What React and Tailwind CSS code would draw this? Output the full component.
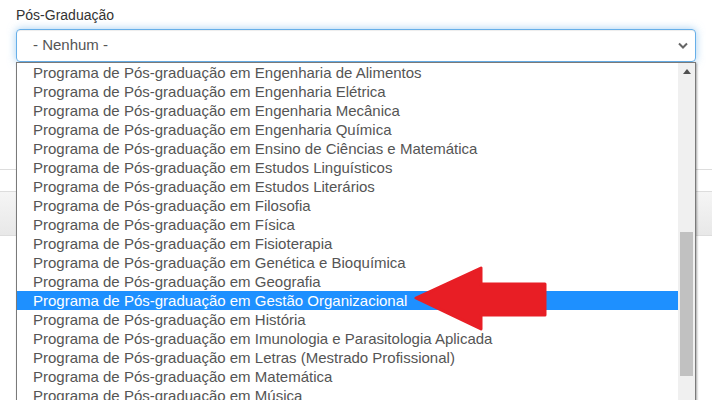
import React from "react";

const items = [
  "Engenharia de Alimentos",
  "Engenharia Elétrica",
  "Engenharia Mecânica",
  "Engenharia Química",
  "Ensino de Ciências e Matemática",
  "Estudos Linguísticos",
  "Estudos Literários",
  "Filosofia",
  "Física",
  "Fisioterapia",
  "Genética e Bioquímica",
  "Geografia",
  "Gestão Organizacional",
  "História",
  "Imunologia e Parasitologia Aplicada",
  "Letras (Mestrado Profissional)",
  "Matemática",
  "Música",
];

export default function App() {
  return (
    <div
      className="relative w-[712px] h-[400px] overflow-hidden bg-white"
      style={{ fontFamily: '"Liberation Sans", Arial, sans-serif' }}
    >
      {/* background panels */}
      <div className="h-[170px] border-b border-[#dddddd] px-4 pt-[5px]">
        <div className="text-[14px] leading-[20px] text-[#333]">Pós-Graduação</div>
        <div className="mt-[4px] h-[33px] rounded-[4px] border border-[#66afe9] shadow-[inset_0_1px_1px_rgba(0,0,0,.075),0_0_8px_rgba(102,175,233,.6)] flex items-center justify-between pl-4 pr-[6px]">
          <span className="text-[15px] text-[#555]">- Nenhum -</span>
          <svg width="12" height="8" viewBox="0 0 12 8">
            <path d="M2 1.5 L6 5.5 L10 1.5" fill="none" stroke="#666" strokeWidth="2" />
          </svg>
        </div>
      </div>
      <div className="mt-[21px] border-t border-[#dddddd]">
        <div className="h-[44px] border-b border-[#dddddd] bg-gradient-to-b from-[#f5f5f5] to-[#e8e8e8]" />
      </div>

      {/* open dropdown list */}
      <div className="absolute left-4 top-[62px] w-[680px] h-[360px] bg-white border border-[#7a7a7a] shadow-[1px_1px_2px_rgba(0,0,0,0.35)] flex">
        <div className="flex-1 flex flex-col">
          {items.map((it, i) => (
            <div
              key={i}
              className={
                "h-[19px] leading-[19px] pl-4 text-[15px] whitespace-nowrap " +
                (i === 12 ? "bg-[#1e90ff] text-white" : "text-[#555]")
              }
            >
              Programa de Pós-graduação em {it}
            </div>
          ))}
        </div>
        <div className="w-[17px] bg-[#f0f0f0] flex flex-col items-center">
          <div className="h-[17px] flex items-center justify-center">
            <svg width="8" height="5" viewBox="0 0 8 5">
              <path d="M0 5 L4 0 L8 5 Z" fill="#505050" />
            </svg>
          </div>
          <div className="mt-[152px] w-[13px] h-[144px] bg-[#c1c1c1]" />
        </div>
      </div>

      {/* red arrow */}
      <svg className="absolute left-0 top-0" width="712" height="400" viewBox="0 0 712 400">
        <polygon
          points="416,298 481,268 481,284 545,284 545,315 481,315 481,329"
          fill="#e81e25"
          stroke="#e81e25"
          strokeWidth="3"
          strokeLinejoin="round"
        />
      </svg>
    </div>
  );
}
